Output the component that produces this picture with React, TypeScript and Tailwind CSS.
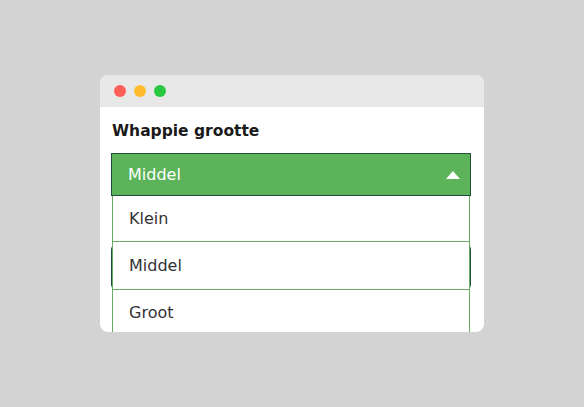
const options = ['Klein', 'Middel', 'Groot'];

export default function App() {
  return (
    <div className="w-[584px] h-[407px] bg-[#d3d3d3] flex justify-center pt-[75px] font-['DejaVu_Sans',sans-serif]">
      <div className="w-[384px] h-[257px] bg-white rounded-lg overflow-hidden flex flex-col">
        {/* titelbalk */}
        <div className="h-[32px] bg-[#e8e8e8] flex items-center gap-[8px] px-[14px] shrink-0">
          <span className="w-[12px] h-[12px] rounded-full bg-[#ff5f57]" />
          <span className="w-[12px] h-[12px] rounded-full bg-[#febc2e]" />
          <span className="w-[12px] h-[12px] rounded-full bg-[#28c840]" />
        </div>

        <div className="pl-[11px] pt-[14px]">
          <h3 className="text-[15.5px] leading-[20px] font-extrabold text-[#1a1a1a] mb-[12px] pl-[1px]">Whappie grootte</h3>

          <div className="relative w-[360px]">
            {/* select */}
            <div className="h-[43px] bg-[#5cb35a] border border-[#1f4d3f] flex items-center justify-between pl-[16px] pr-[10px] text-white text-[16px]">
              <span>Middel</span>
              <svg width="14" height="8" viewBox="0 0 14 8">
                <polygon points="7,0 14,8 0,8" fill="white" />
              </svg>
            </div>

            {/* veld eronder */}
            <div className="mt-[49px] h-[44px] border border-[#1f4d3f] rounded-sm" />

            {/* uitklaplijst */}
            <div className="absolute top-[43px] left-[1px] right-[1px] bg-white">
              {options.map((o, i) => (
                <div
                  key={o}
                  className={`border-x border-b border-[#6aab63] flex items-center pl-[16px] text-[16px] text-[#333] ${
                    i === 1 ? 'h-[48px]' : 'h-[46px]'
                  }`}
                >
                  {o}
                </div>
              ))}
            </div>
          </div>
        </div>
      </div>
    </div>
  );
}
